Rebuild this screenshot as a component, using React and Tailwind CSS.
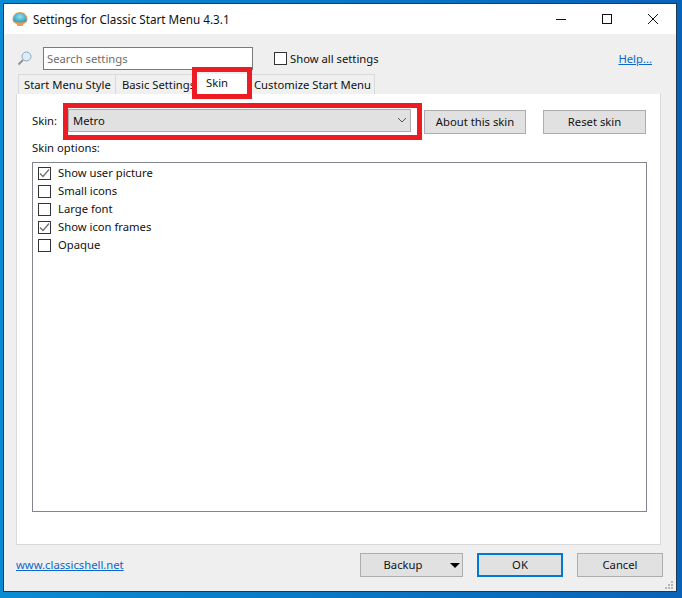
import React from "react";

function Chk({ on, label }) {
  return (
    <div className="flex h-[18px] items-center">
      <span className="flex h-[13px] w-[13px] shrink-0 items-center justify-center border border-[#333333] bg-white">
        {on && (
          <svg width="11" height="11" viewBox="0 0 11 11" fill="none">
            <path d="M1 5.5 L4 8.5 L10 1.5" stroke="#6e6e6e" strokeWidth="1.2" />
          </svg>
        )}
      </span>
      <span className="ml-[7px] whitespace-nowrap">{label}</span>
    </div>
  );
}

function Btn({ className, children }) {
  return (
    <div className={"flex h-[24px] shrink-0 items-center justify-center bg-[#e1e1e1] " + className}>
      {children}
    </div>
  );
}

function Tab({ w, children }) {
  return (
    <div className={"flex h-[20px] items-center whitespace-nowrap border-t border-r border-[#d9d9d9] bg-[#f0f0f0] " + w}>
      {children}
    </div>
  );
}

export default function App() {
  return (
    <div className="relative h-[598px] w-[682px] overflow-hidden bg-gradient-to-r from-[#0a8cd4] to-[#0a62b8] pl-[3px] pt-[3px] font-['Noto_Sans','Open_Sans',sans-serif] text-[11.25px] leading-[16px] text-[#111111]">
      <div className="flex h-[589px] w-[674px] flex-col border border-[#1d3a52] bg-[#efefef]">
        <div className="flex h-[30px] shrink-0 items-center bg-white pl-[8px] text-[11.7px]">
          <svg width="16" height="16" viewBox="0 0 16 16">
            <defs>
              <radialGradient id="shell" cx="50%" cy="40%" r="60%">
                <stop offset="0%" stopColor="#8fe3e8" />
                <stop offset="100%" stopColor="#2f9fc4" />
              </radialGradient>
            </defs>
            <path d="M0.6 9.5 C0 4 4 1 8 1 C12 1 16 4 15.4 9.5 C15 11.5 13 12.5 11.5 13 L10.5 15 L5.5 15 L4.5 13 C3 12.5 1 11.5 0.6 9.5Z" fill="#e89a55" />
            <path d="M1.5 9.2 C1.1 4.5 5 1.8 8 1.8 C11 1.8 14.9 4.5 14.5 9.2 C13.5 12.2 2.5 12.2 1.5 9.2Z" fill="url(#shell)" />
          </svg>
          <span className="ml-[5px]">Settings for Classic Start Menu 4.3.1</span>
          <div className="ml-auto flex h-full items-center">
            <svg width="46" height="30" viewBox="0 0 46 30"><path d="M18 15.5H28" stroke="#111" /></svg>
            <svg width="46" height="30" viewBox="0 0 46 30"><rect x="18.5" y="10.5" width="9" height="9" fill="none" stroke="#111" /></svg>
            <svg width="46" height="30" viewBox="0 0 46 30"><path d="M18 10L28 20M28 10L18 20" stroke="#111" /></svg>
          </div>
        </div>

        <div className="flex flex-1 flex-col pl-[12px] pr-[12px]">
          <div className="mt-[13px] flex h-[23px] items-center">
            <svg className="ml-px" width="15" height="15" viewBox="0 0 15 15" fill="none">
              <circle cx="9.5" cy="5.5" r="4.5" fill="#dcecf8" stroke="#8fa7bb" />
              <path d="M6 9 L1.5 13.5" stroke="#8a94a3" strokeWidth="2" />
            </svg>
            <div className="ml-[11px] flex h-[23px] w-[210px] items-center border border-[#7a7a7a] bg-white pl-[3px] text-[#6d6d6d]">Search settings</div>
            <span className="ml-[21px] h-[13px] w-[13px] border border-[#333333] bg-white" />
            <span className="ml-[3px]">Show all settings</span>
            <span className="ml-auto mr-[12px] text-[#0b66d0] underline">Help...</span>
          </div>

          <div className="ml-[2px] mt-[4px] flex h-[20px]">
            <div className="border-l border-[#d9d9d9]" />
            <Tab w="w-[97px] pl-[5px]">Start Menu Style</Tab>
            <Tab w="w-[79px] pl-[6px]">Basic Settings</Tab>
            <div className="flex h-[20px] w-[56px] items-start bg-white pl-[11px] pt-[1px]">Skin</div>
            <Tab w="w-[124px] pl-[3px]">Customize Start Menu</Tab>
          </div>

          <div className="flex h-[451px] w-[645px] flex-col border border-t-0 border-[#d9d9d9] bg-white pl-[15px]">
            <div className="mt-[15px] flex h-[25px] items-start">
              <span className="flex h-[23px] w-[36px] items-center">Skin:</span>
              <div className="flex h-[23px] w-[343px] items-center justify-between border border-[#adadad] bg-[#e1e1e1] pl-[4px] pr-[3px]">
                Metro
                <svg width="10" height="7" viewBox="0 0 10 7" fill="none"><path d="M1 1 L5 5 L9 1" stroke="#555" /></svg>
              </div>
              <Btn className="ml-[13px] mt-px w-[102px] border border-[#adadad]">About this skin</Btn>
              <Btn className="ml-[17px] mt-px w-[103px] border border-[#adadad]">Reset skin</Btn>
            </div>
            <div className="mt-[6px]">Skin options:</div>
            <div className="mt-[6px] h-[350px] w-[615px] border border-[#82858f] bg-white pl-[5px] pt-px">
              <Chk on label="Show user picture" />
              <Chk label="Small icons" />
              <Chk label="Large font" />
              <Chk on label="Show icon frames" />
              <Chk label="Opaque" />
            </div>
          </div>

          <div className="mr-px mt-[8px] flex h-[24px] items-center">
            <span className="text-[#0b66d0] underline">www.classicshell.net</span>
            <Btn className="relative ml-auto w-[103px] border border-[#adadad] pr-[17px]">
              Backup
              <span className="absolute right-[2px] top-[9px] h-0 w-0 border-x-[5px] border-t-[5px] border-x-transparent border-t-black" />
            </Btn>
            <Btn className="ml-[14px] w-[86px] border-2 border-[#0078d7]">OK</Btn>
            <Btn className="ml-[14px] w-[86px] border border-[#adadad]">Cancel</Btn>
          </div>
        </div>
      </div>

      <svg className="absolute left-[665px] top-[581px]" width="9" height="9" viewBox="0 0 9 9" fill="#b5b5b5">
        <rect x="6" y="0" width="2" height="2" />
        <rect x="3" y="3" width="2" height="2" />
        <rect x="6" y="3" width="2" height="2" />
        <rect x="0" y="6" width="2" height="2" />
        <rect x="3" y="6" width="2" height="2" />
        <rect x="6" y="6" width="2" height="2" />
      </svg>
      <div className="absolute left-[192px] top-[67px] h-[32px] w-[60px] border-[5px] border-[#ed1c24]" />
      <div className="absolute left-[63px] top-[103px] h-[37px] w-[359px] border-[5px] border-[#ed1c24]" />
    </div>
  );
}
